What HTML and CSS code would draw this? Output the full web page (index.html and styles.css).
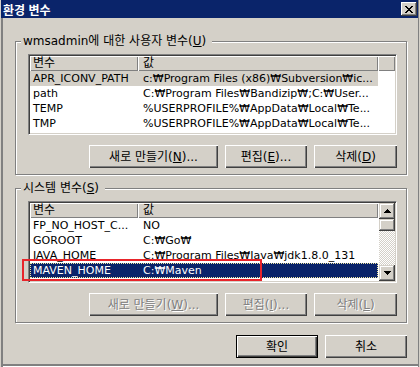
FILE: index.html
```html
<!DOCTYPE html>
<html lang="ko">
<head>
<meta charset="utf-8">
<title>환경 변수</title>
<link rel="stylesheet" href="styles.css">
</head>
<body>
<div class="window">
  <div class="titlebar">
    <span class="title">환경 변수</span>
    <span class="close">
      <svg width="8" height="7" viewBox="0 0 8 7" shape-rendering="crispEdges"><path fill="#000" d="M0 0h2v1H0zM6 0h2v1H6zM1 1h2v1H1zM5 1h2v1H5zM2 2h4v1H2zM3 3h2v1H3zM2 4h4v1H2zM1 5h2v1H1zM5 5h2v1H5zM0 6h2v1H0zM6 6h2v1H6z"/></svg>
    </span>
  </div>
  <div class="client">
    <fieldset class="group">
      <legend>wmsadmin에 대한 사용자 변수(<u>U</u>)</legend>
      <div class="group-body">
        <div class="list list-user">
          <div class="lv">
            <div class="lv-head">
              <div class="hcell c1">변수</div>
              <div class="hcell c2">값</div>
              <div class="hcell c3"></div>
            </div>
            <div class="row sel-inactive"><span class="cell c1">APR_ICONV_PATH</span><span class="cell c2">c:₩Program Files (x86)₩Subversion₩ic...</span></div>
            <div class="row"><span class="cell c1">path</span><span class="cell c2">C:₩Program Files₩Bandizip₩;C:₩User...</span></div>
            <div class="row"><span class="cell c1">TEMP</span><span class="cell c2">%USERPROFILE%₩AppData₩Local₩Te...</span></div>
            <div class="row"><span class="cell c1">TMP</span><span class="cell c2">%USERPROFILE%₩AppData₩Local₩Te...</span></div>
          </div>
        </div>
        <div class="btn-row">
          <button class="btn w-new">새로 만들기(<u>N</u>)...</button>
          <button class="btn w-edit">편집(<u>E</u>)...</button>
          <button class="btn w-del">삭제(<u>D</u>)</button>
        </div>
      </div>
    </fieldset>

    <fieldset class="group group-sys">
      <legend>시스템 변수(<u>S</u>)</legend>
      <div class="group-body">
        <div class="list list-sys">
          <div class="lv">
            <div class="lv-head">
              <div class="hcell c1">변수</div>
              <div class="hcell c2">값</div>
              <div class="hcell c3"></div>
            </div>
            <div class="row"><span class="cell c1">FP_NO_HOST_C...</span><span class="cell c2">NO</span></div>
            <div class="row"><span class="cell c1">GOROOT</span><span class="cell c2">C:₩Go₩</span></div>
            <div class="row"><span class="cell c1">JAVA_HOME</span><span class="cell c2">C:₩Program Files₩Java₩jdk1.8.0_131</span></div>
            <div class="row sel-active"><span class="cell c1">MAVEN_HOME</span><span class="cell c2">C:₩Maven</span></div>
            <div class="row"><span class="cell c1">NUMBER_OF_PR...</span><span class="cell c2">4</span></div>
          </div>
          <div class="sb">
            <div class="sb-btn">
              <svg width="7" height="4" viewBox="0 0 7 4" shape-rendering="crispEdges"><path fill="#000" d="M3 0h1v1H3zM2 1h3v1H2zM1 2h5v1H1zM0 3h7v1H0z"/></svg>
            </div>
            <div class="sb-thumb"></div>
            <div class="sb-track"></div>
            <div class="sb-btn">
              <svg width="7" height="4" viewBox="0 0 7 4" shape-rendering="crispEdges"><path fill="#000" d="M0 0h7v1H0zM1 1h5v1H1zM2 2h3v1H2zM3 3h1v1H3z"/></svg>
            </div>
          </div>
        </div>
        <div class="btn-row">
          <button class="btn w-new" disabled>새로 만들기(<u>W</u>)...</button>
          <button class="btn w-edit" disabled>편집(<u>I</u>)...</button>
          <button class="btn w-del" disabled>삭제(<u>L</u>)</button>
        </div>
      </div>
    </fieldset>

    <div class="dialog-buttons">
      <button class="btn default w-ok">확인</button>
      <button class="btn w-ok">취소</button>
    </div>
  </div>
  <div class="mark"></div>
</div>
</body>
</html>
```
FILE: styles.css
```css
* { box-sizing: border-box; }
html, body { margin: 0; padding: 0; }
body {
  width: 420px;
  height: 367px;
  overflow: hidden;
  background: #d4d0c8;
  font: 12px/14px "DejaVu Sans", "Noto Sans CJK KR", sans-serif;
  color: #000;
}
.window {
  position: relative;
  width: 420px;
  height: 367px;
  background: #d4d0c8;
  box-shadow:
    inset 1px 0 0 #d4d0c8,
    inset 3px 0 0 #808080,
    inset -1px 0 0 #d4d0c8,
    inset -2px 0 0 #808080,
    inset 0 -1px 0 #fff,
    inset 0 -3px 0 #808080;
}
.titlebar {
  display: flex;
  align-items: flex-start;
  justify-content: space-between;
  height: 18px;
  margin: 0 2px 0 1px;
  padding: 2px 1px 0 2px;
  background: #0a246a;
  color: #fff;
}
.title {
  font-family: "Noto Sans CJK KR", sans-serif;
  font-weight: bold;
  font-size: 12px;
  line-height: 14px;
  margin-top: 1px;
}
.close {
  width: 16px;
  height: 14px;
  display: flex;
  align-items: center;
  justify-content: center;
  padding-left: 0;
  background: #d4d0c8;
  box-shadow: inset -1px -1px 0 #404040, inset 1px 1px 0 #fff, inset -2px -2px 0 #808080;
}
.close svg { display: block; margin-left: -1px; }

.client {
  display: flex;
  flex-direction: column;
  padding: 16px 13px 0 15px;
}
.group {
  margin: 0;
  padding: 0;
  min-width: 0;
  border: 1px solid #808080;
  box-shadow: inset 1px 1px 0 #fff, 1px 1px 0 #fff;
}
.group legend {
  margin-left: 5px;
  padding: 0 6px 0 2px;
  line-height: 14px;
  background: #d4d0c8;
  white-space: nowrap;
}
.group-sys { margin-top: 6px; }
.group-body {
  display: flex;
  flex-direction: column;
  padding: 6px 9px 6px 12px;
}

.list {
  display: flex;
  width: 369px;
  height: 81px;
  padding: 1px;
  background: #fff;
  border: 1px solid;
  border-color: #808080 #fff #fff #808080;
  box-shadow: inset 1px 1px 0 #404040, inset -1px -1px 0 #d4d0c8;
  overflow: hidden;
}
.list-sys { height: 82px; }
.lv { flex: 1; min-width: 0; overflow: hidden; }
.lv-head { display: flex; height: 15px; }
.hcell {
  height: 15px;
  line-height: 15px;
  padding-left: 3px;
  background: #d4d0c8;
  box-shadow: inset 1px 1px 0 #fff, inset -1px -1px 0 #808080;
  white-space: nowrap;
}
.c1 { width: 108px; flex: none; }
.c2 { width: 240px; flex: none; padding-left: 5px; }
.c3 { flex: 1; }

.row {
  display: flex;
  width: 348px;
  height: 15px;
  line-height: 15px;
  font-size: 11px;
}
.cell {
  padding-left: 3px;
  overflow: hidden;
  white-space: nowrap;
}
.row .c2 { padding-left: 5px; }
.sel-inactive { background: #d4d0c8; }
.sel-active {
  background: #0a246a;
  color: #fff;
  outline: 1px dotted #f0e6a0;
  outline-offset: -1px;
}

.sb {
  width: 16px;
  flex: none;
  display: flex;
  flex-direction: column;
  background: repeating-conic-gradient(#d4d0c8 0 25%, #fff 0 50%) 0 0 / 2px 2px;
}
.sb-btn {
  height: 16px;
  display: flex;
  align-items: center;
  justify-content: center;
  background: #d4d0c8;
  box-shadow: inset -1px -1px 0 #404040, inset 1px 1px 0 #d4d0c8, inset -2px -2px 0 #808080, inset 2px 2px 0 #fff;
}
.sb-btn svg { display: block; }
.sb-thumb {
  height: 12px;
  background: #d4d0c8;
  box-shadow: inset -1px -1px 0 #404040, inset 1px 1px 0 #d4d0c8, inset -2px -2px 0 #808080, inset 2px 2px 0 #fff;
}
.sb-track { flex: 1; }

.btn-row {
  display: flex;
  justify-content: flex-end;
  gap: 7px;
  margin-top: 10px;
}
.btn {
  height: 23px;
  padding: 0;
  margin: 0;
  border: none;
  font: inherit;
  line-height: 14px;
  color: #000;
  background: #d4d0c8;
  box-shadow: inset 1px 1px 0 #fff, inset -1px -1px 0 #404040, inset -2px -2px 0 #808080;
  white-space: nowrap;
}
.btn:disabled {
  color: #808080;
  text-shadow: 1px 1px 0 #fff;
}
.btn.default {
  box-shadow: inset 1px 1px 0 #000, inset -1px -1px 0 #000, inset 2px 2px 0 #fff, inset -2px -2px 0 #404040, inset -3px -3px 0 #808080;
}
.w-new { width: 129px; }
.w-edit { width: 82px; }
.w-del { width: 83px; }
.w-ok { width: 82px; }

.dialog-buttons {
  display: flex;
  justify-content: flex-end;
  gap: 7px;
  margin-top: 12px;
}

.mark {
  position: absolute;
  left: 22px;
  top: 259px;
  width: 240px;
  height: 22px;
  border: 2px solid #e8242a;
}
```
